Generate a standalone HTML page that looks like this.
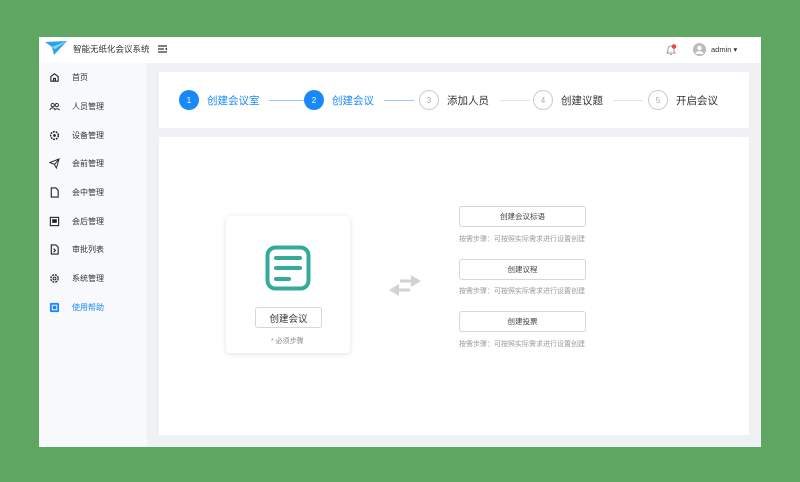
<!DOCTYPE html>
<html><head><meta charset="utf-8"><style>
*{margin:0;padding:0;box-sizing:border-box}
body{width:800px;height:482px;background:#5fa662;font-family:"Liberation Sans","Noto Sans CJK SC",sans-serif;position:relative;overflow:hidden}
.win{position:absolute;left:39px;top:37px;width:722px;height:410px;background:#f0f1f5}
.hdr{position:absolute;left:0;top:0;width:722px;height:26px;background:#fff}
.side{position:absolute;left:0;top:26px;width:108px;height:384px;background:#f8f9fb}
.mi{position:absolute;left:10px;font-size:8px;color:#333;height:14px;display:flex;align-items:center}
.mi svg{width:11px;height:11px;margin-right:12px}
.card{position:absolute;background:#fff}
.st{position:absolute;top:90px;display:flex;align-items:center;height:20px}
.c{width:20px;height:20px;border-radius:50%;font-size:8px;display:flex;align-items:center;justify-content:center;margin-right:8px}
.c.a{background:#1989fa;color:#fff}
.c.i{border:1.5px solid #ccc;color:#aaa}
.lb{font-size:10.5px}
.ln{position:absolute;top:100px;height:1px}
.btn{position:absolute;border:1px solid #d6d6d6;border-radius:3px;background:#fff;font-size:7.5px;color:#444;display:flex;align-items:center;justify-content:center}
.tip{position:absolute;font-size:7px;color:#999;white-space:nowrap}
</style></head><body>
<div class="win">
 <div class="hdr">
  <svg style="position:absolute;left:6px;top:4px" width="22" height="14" viewBox="0 0 22 14"><path d="M0 1L22 0L9 14L7 6Z" fill="#2aa5e8"/><path d="M7 6L22 0L10 8Z" fill="#8fd3f7"/></svg>
  <div style="position:absolute;left:34px;top:6px;font-size:8.5px;color:#333">智能无纸化会议系统</div>
  <svg style="position:absolute;left:119px;top:8px" width="9" height="8"><path d="M0 1h9M0 4h6M0 7h9" stroke="#333" stroke-width="1.2"/><path d="M9 2.5l-2 1.5 2 1.5z" fill="#333"/></svg>
  <svg style="position:absolute;left:626px;top:7px" width="12" height="12" viewBox="0 0 12 12"><path d="M2 9h8l-1-2V5a3 3 0 0 0-6 0v2z" fill="none" stroke="#999"/><path d="M5 10.5h2" stroke="#999"/><circle cx="9" cy="2.5" r="2.3" fill="#f5453d"/></svg>
  <svg style="position:absolute;left:654px;top:6px" width="13" height="13"><circle cx="6.5" cy="6.5" r="6.5" fill="#bbb"/><circle cx="6.5" cy="5" r="2.2" fill="#fff"/><path d="M2.5 11a4 3 0 0 1 8 0" fill="#fff"/></svg>
  <div style="position:absolute;left:672px;top:8px;font-size:7.5px;color:#333">admin ▾</div>
 </div>
 <div class="side">
  <div class="mi" style="top:7px"><svg viewBox="0 0 12 12"><path d="M2 5L6 2l4 3v5H2z M5 10V7h2v3" fill="none" stroke="#222" stroke-width="1.2"/></svg>首页</div>
  <div class="mi" style="top:36px"><svg viewBox="0 0 12 12"><circle cx="4" cy="4.5" r="1.8" fill="none" stroke="#222"/><circle cx="8.5" cy="4.5" r="1.8" fill="none" stroke="#222"/><path d="M1 10a3 2.5 0 0 1 6 0M6 10a3 2.5 0 0 1 5.5 0" fill="none" stroke="#222"/></svg>人员管理</div>
  <div class="mi" style="top:65px"><svg viewBox="0 0 12 12"><circle cx="6" cy="6" r="4.2" fill="none" stroke="#222" stroke-width="1.6" stroke-dasharray="2 1"/><circle cx="6" cy="6" r="1.5" fill="#222"/></svg>设备管理</div>
  <div class="mi" style="top:93px"><svg viewBox="0 0 12 12"><path d="M1 5L11 1 8 11 6 7z M6 7L11 1" fill="none" stroke="#222"/></svg>会前管理</div>
  <div class="mi" style="top:122px"><svg viewBox="0 0 12 12"><path d="M2.5 1h5l2.5 2.5V11h-7.5z" fill="none" stroke="#222" stroke-width="1.2"/></svg>会中管理</div>
  <div class="mi" style="top:151px"><svg viewBox="0 0 12 12"><rect x="1.5" y="1.5" width="9" height="9" fill="none" stroke="#222" stroke-width="1.2"/><rect x="3.5" y="3.5" width="5" height="4" fill="#222"/></svg>会后管理</div>
  <div class="mi" style="top:179px"><svg viewBox="0 0 12 12"><path d="M2.5 1h5l2.5 2.5V11h-7.5z M5 5l2 2-2 2" fill="none" stroke="#222" stroke-width="1.2"/></svg>审批列表</div>
  <div class="mi" style="top:208px"><svg viewBox="0 0 12 12"><circle cx="6" cy="6" r="4" fill="none" stroke="#222" stroke-width="1.4" stroke-dasharray="2.2 1"/><circle cx="6" cy="6" r="1.6" fill="none" stroke="#222"/></svg>系统管理</div>
  <div class="mi" style="top:237px;color:#1989fa"><svg viewBox="0 0 12 12"><rect x="1" y="1" width="10" height="10" rx="1.5" fill="#1989fa"/><rect x="3.5" y="3.5" width="5" height="5" fill="none" stroke="#fff"/></svg>使用帮助</div>
 </div>
 <div class="card" style="left:120px;top:35px;width:590px;height:56px"></div>
 <div class="card" style="left:120px;top:100px;width:590px;height:298px"></div>
</div>
<div class="ln" style="left:269px;width:52px;background:#9cc9f5"></div>
<div class="ln" style="left:384px;width:30px;background:#9cc9f5"></div>
<div class="ln" style="left:500px;width:30px;background:#e4e4e4"></div>
<div class="ln" style="left:613px;width:30px;background:#e4e4e4"></div>
<div class="st" style="left:179px"><div class="c a">1</div><span class="lb" style="color:#1989fa">创建会议室</span></div>
<div class="st" style="left:304px"><div class="c a">2</div><span class="lb" style="color:#1989fa">创建会议</span></div>
<div class="st" style="left:419px"><div class="c i">3</div><span class="lb" style="color:#333">添加人员</span></div>
<div class="st" style="left:533px"><div class="c i">4</div><span class="lb" style="color:#333">创建议题</span></div>
<div class="st" style="left:648px"><div class="c i">5</div><span class="lb" style="color:#333">开启会议</span></div>

<div style="position:absolute;left:226px;top:216px;width:124px;height:137px;background:#fff;border-radius:4px;box-shadow:0 1px 6px rgba(0,0,0,.12)"></div>
<svg style="position:absolute;left:265px;top:245px" width="46" height="46" viewBox="0 0 46 46"><rect x="2.5" y="2.5" width="41" height="41" rx="8" fill="none" stroke="#35a99a" stroke-width="4"/><path d="M11 13h24M11 23h24M11 34h13" stroke="#35a99a" stroke-width="4" stroke-linecap="round"/></svg>
<div class="btn" style="left:255px;top:307px;width:67px;height:21px;font-size:9.5px;color:#333">创建会议</div>
<div class="tip" style="left:271px;top:336px;color:#888"><span style="color:#f56c6c">*</span> 必须步骤</div>
<svg style="position:absolute;left:388px;top:273px" width="34" height="24" viewBox="0 0 34 24"><path d="M12 8h12" stroke="#d2d2d2" stroke-width="3"/><path d="M23 2L33 8 23 14z" fill="#d2d2d2"/><path d="M22 17H10" stroke="#d2d2d2" stroke-width="3"/><path d="M11 11L1 17 11 23z" fill="#d2d2d2"/></svg>
<div class="btn" style="left:459px;top:206px;width:127px;height:21px">创建会议标语</div>
<div class="tip" style="left:459px;top:234px">按需步骤：可按照实际需求进行设置创建</div>
<div class="btn" style="left:459px;top:259px;width:127px;height:21px">创建议程</div>
<div class="tip" style="left:459px;top:286px">按需步骤：可按照实际需求进行设置创建</div>
<div class="btn" style="left:459px;top:311px;width:127px;height:21px">创建投票</div>
<div class="tip" style="left:459px;top:339px">按需步骤：可按照实际需求进行设置创建</div>
</body></html>
